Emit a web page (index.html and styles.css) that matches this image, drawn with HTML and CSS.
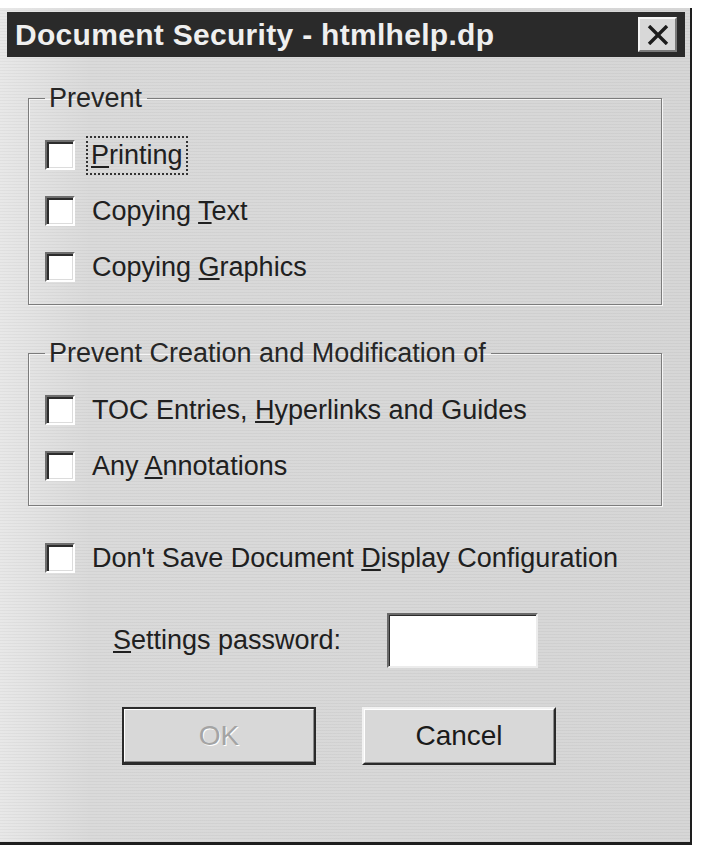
FILE: index.html
```html
<!DOCTYPE html>
<html>
<head>
<meta charset="utf-8">
<link rel="stylesheet" href="styles.css">
</head>
<body>
<div class="window">
  <div class="titlebar">
    <span class="title">Document Security - htmlhelp.dp</span>
    <span class="close">
      <svg width="22" height="20" viewBox="0 0 22 20"><path d="M2 1 L20 19 M20 1 L2 19" stroke="#1c1c1c" stroke-width="3.4" fill="none"/></svg>
    </span>
  </div>
  <div class="body">
    <fieldset class="group">
      <legend>Prevent</legend>
      <div class="row"><span class="box"></span><span class="label focus"><u>P</u>rinting</span></div>
      <div class="row"><span class="box"></span><span class="label">Copying <u>T</u>ext</span></div>
      <div class="row"><span class="box"></span><span class="label">Copying <u>G</u>raphics</span></div>
    </fieldset>
    <fieldset class="group group2">
      <legend>Prevent Creation and Modification of</legend>
      <div class="row"><span class="box"></span><span class="label">TOC Entries, <u>H</u>yperlinks and Guides</span></div>
      <div class="row"><span class="box"></span><span class="label">Any <u>A</u>nnotations</span></div>
    </fieldset>
    <div class="row solo"><span class="box"></span><span class="label">Don't Save Document <u>D</u>isplay Configuration</span></div>
    <div class="pwrow">
      <span class="pwlabel"><u>S</u>ettings password:</span>
      <span class="edit"></span>
    </div>
    <div class="buttons">
      <span class="btn default"><span class="inner disabled">OK</span></span>
      <span class="btn"><span class="inner">Cancel</span></span>
    </div>
  </div>
</div>
</body>
</html>
```
FILE: styles.css
```css
html, body {
  margin: 0;
  padding: 0;
  background: #ffffff;
}
body {
  font-family: "Liberation Sans", Arial, sans-serif;
  color: #202020;
}
.window {
  box-sizing: border-box;
  width: 692px;
  height: 837px;
  margin-top: 8px;
  padding: 4px 5px 0 7px;
  border-right: 2px solid #1e1e1e;
  border-bottom: 3px solid #1e1e1e;
  background:
    repeating-linear-gradient(0deg, rgba(0,0,0,0.035) 0 1px, transparent 1px 3px),
    linear-gradient(90deg, #e8e8e8 0, #dadada 90px, #d6d6d6 100%);
}
.titlebar {
  height: 45px;
  background: #2a2a2a;
  display: flex;
  align-items: center;
  justify-content: space-between;
  padding: 0 8px 0 8px;
}
.title {
  color: #efefef;
  font-weight: bold;
  font-size: 30px;
  letter-spacing: 0.3px;
  line-height: 34px;
}
.close {
  box-sizing: border-box;
  width: 39px;
  height: 35px;
  background: #d8d8d8;
  border: 2px solid;
  border-color: #f4f4f4 #7a7a7a #7a7a7a #f4f4f4;
  display: flex;
  align-items: center;
  justify-content: center;
}
.body {
  padding: 26px 23px 0 21px;
}
.group {
  margin: 0;
  padding: 14px 0 9px 16px;
  border: 1px solid #7c7c7c;
  box-shadow: inset 1px 1px 0 #f6f6f6, 1px 1px 0 #f6f6f6;
  min-width: 0;
}
.group2 {
  margin-top: 33px;
  padding-bottom: 11px;
}
legend {
  padding: 0 5px 0 4px;
  font-size: 27px;
  line-height: 30px;
  color: #262626;
}
.row {
  height: 56px;
  display: flex;
  align-items: center;
}
.solo {
  margin-top: 24px;
  margin-left: 17px;
}
.box {
  box-sizing: border-box;
  width: 30px;
  height: 30px;
  flex: none;
  background: #ffffff;
  border: 2px solid;
  border-color: #6e6e6e #ffffff #ffffff #6e6e6e;
  box-shadow: inset 2px 2px 0 #2c2c2c, inset -1px -1px 0 #dcdcdc;
}
.label {
  font-size: 27px;
  line-height: 35px;
  margin-left: 13px;
  padding: 0 3px;
  border: 1px solid transparent;
}
.focus {
  margin-left: 11px;
  border: 2px dotted #333;
}
.pwrow {
  display: flex;
  align-items: center;
  margin-top: 27px;
  height: 55px;
}
.pwlabel {
  font-size: 27px;
  margin-left: 85px;
  width: 274px;
}
.edit {
  box-sizing: border-box;
  width: 151px;
  height: 55px;
  background: #fff;
  border: 2px solid;
  border-color: #6a6a6a #ececec #ececec #6a6a6a;
  box-shadow: inset 1px 1px 0 #2c2c2c;
}
.buttons {
  display: flex;
  gap: 46px;
  margin-top: 39px;
  margin-left: 94px;
}
.btn {
  box-sizing: border-box;
  width: 194px;
  height: 58px;
  background: #d8d8d8;
  border: 2px solid;
  border-color: #f2f2f2 #2a2a2a #2a2a2a #f2f2f2;
  display: flex;
}
.btn.default {
  border: 2px solid #2a2a2a;
  border-bottom-width: 3px;
}
.inner {
  flex: 1;
  display: flex;
  align-items: center;
  justify-content: center;
  font-size: 28px;
  color: #1a1a1a;
  border: 1px solid;
  border-color: #ffffff #8a8a8a #8a8a8a #ffffff;
}
.inner.disabled {
  color: #a4a4a4;
  text-shadow: 1px 1px 0 #ffffff;
}
```
